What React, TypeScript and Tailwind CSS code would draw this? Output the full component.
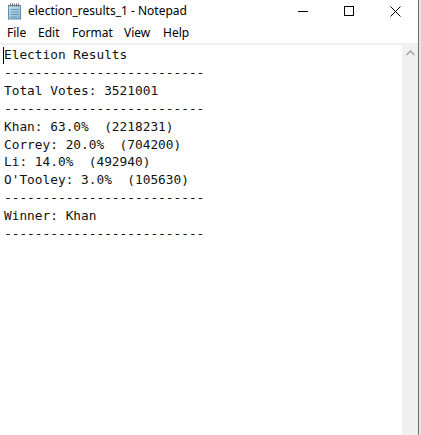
import React from "react";

const lines = [
  "Election Results",
  "--------------------------",
  "Total Votes: 3521001",
  "--------------------------",
  "Khan: 63.0%  (2218231)",
  "Correy: 20.0%  (704200)",
  "Li: 14.0%  (492940)",
  "O'Tooley: 3.0%  (105630)",
  "--------------------------",
  "Winner: Khan",
  "--------------------------",
];

function NotepadIcon() {
  return (
    <svg width="16" height="17" viewBox="0 0 16 17">
      <defs>
        <linearGradient id="np" x1="0" y1="0" x2="1" y2="1">
          <stop offset="0" stopColor="#cfe6f3" />
          <stop offset="1" stopColor="#7fb3cf" />
        </linearGradient>
      </defs>
      <rect x="1.5" y="2.5" width="12" height="13.5" fill="url(#np)" stroke="#5f8fa8" />
      <line x1="3.5" y1="6.5" x2="11.5" y2="6.5" stroke="#6d9ab3" />
      <line x1="3.5" y1="9" x2="11.5" y2="9" stroke="#6d9ab3" />
      <line x1="3.5" y1="11.5" x2="11.5" y2="11.5" stroke="#6d9ab3" />
      <line x1="3.5" y1="14" x2="9.5" y2="14" stroke="#6d9ab3" />
      {[3, 5, 7, 9, 11].map((x) => (
        <line key={x} x1={x + 0.5} y1="0.5" x2={x + 0.5} y2="3.5" stroke="#6b6b6b" />
      ))}
    </svg>
  );
}

export default function App() {
  return (
    <div className="w-[421px] h-[435px] flex bg-white overflow-hidden" style={{ fontFamily: "'Segoe UI', 'Noto Sans', sans-serif" }}>
      <div className="w-[418px] flex flex-col">
        <div className="h-[22px] flex items-center relative">
          <div className="pl-[7px] pr-[5px] flex items-center">
            <NotepadIcon />
          </div>
          <span className="text-[12px] text-black leading-none">election_results_1 - Notepad</span>
          <div className="ml-auto flex items-center h-full">
            <div className="w-[46px] h-full flex items-center justify-center">
              <svg width="10" height="10" viewBox="0 0 10 10"><line x1="0" y1="5.5" x2="10" y2="5.5" stroke="#000" /></svg>
            </div>
            <div className="w-[46px] h-full flex items-center justify-center">
              <svg width="10" height="10" viewBox="0 0 10 10"><rect x="0.5" y="0.5" width="9" height="9" fill="none" stroke="#000" /></svg>
            </div>
            <div className="w-[46px] h-full flex items-center justify-center">
              <svg width="11" height="11" viewBox="0 0 11 11"><path d="M0.5 0.5 L10.5 10.5 M10.5 0.5 L0.5 10.5" stroke="#000" /></svg>
            </div>
          </div>
        </div>
        <div className="h-[21px] flex items-center text-[12px] text-black pl-[7px] gap-[0px]">
          <span className="w-[31px]">File</span>
          <span className="w-[34px]">Edit</span>
          <span className="w-[52px]">Format</span>
          <span className="w-[39px]">View</span>
          <span>Help</span>
        </div>
        <div className="h-[2px] bg-[#f0f0f0]" />
        <div className="flex-1 flex">
          <div className="flex-1 relative pl-[4px] pt-[1px]">
            <div className="absolute left-[3px] top-[2px] w-[1px] h-[17px] bg-black" />
            <pre
              className="text-[12.8px] leading-[17.9px] text-[#111] m-0"
              style={{ fontFamily: "'DejaVu Sans Mono', monospace" }}
            >
              {lines.join("\n")}
            </pre>
          </div>
          <div className="w-[16px] bg-[#f0f0f0] flex flex-col items-center pt-[5px]">
            <svg width="9" height="6" viewBox="0 0 9 6"><path d="M0.5 5 L4.5 1 L8.5 5" fill="none" stroke="#a3a3a3" strokeWidth="1.5" /></svg>
          </div>
        </div>
      </div>
      <div className="w-[1px] bg-[#6e6e6e]" />
      <div className="w-[2px] bg-[#e6e6e6]" />
    </div>
  );
}
